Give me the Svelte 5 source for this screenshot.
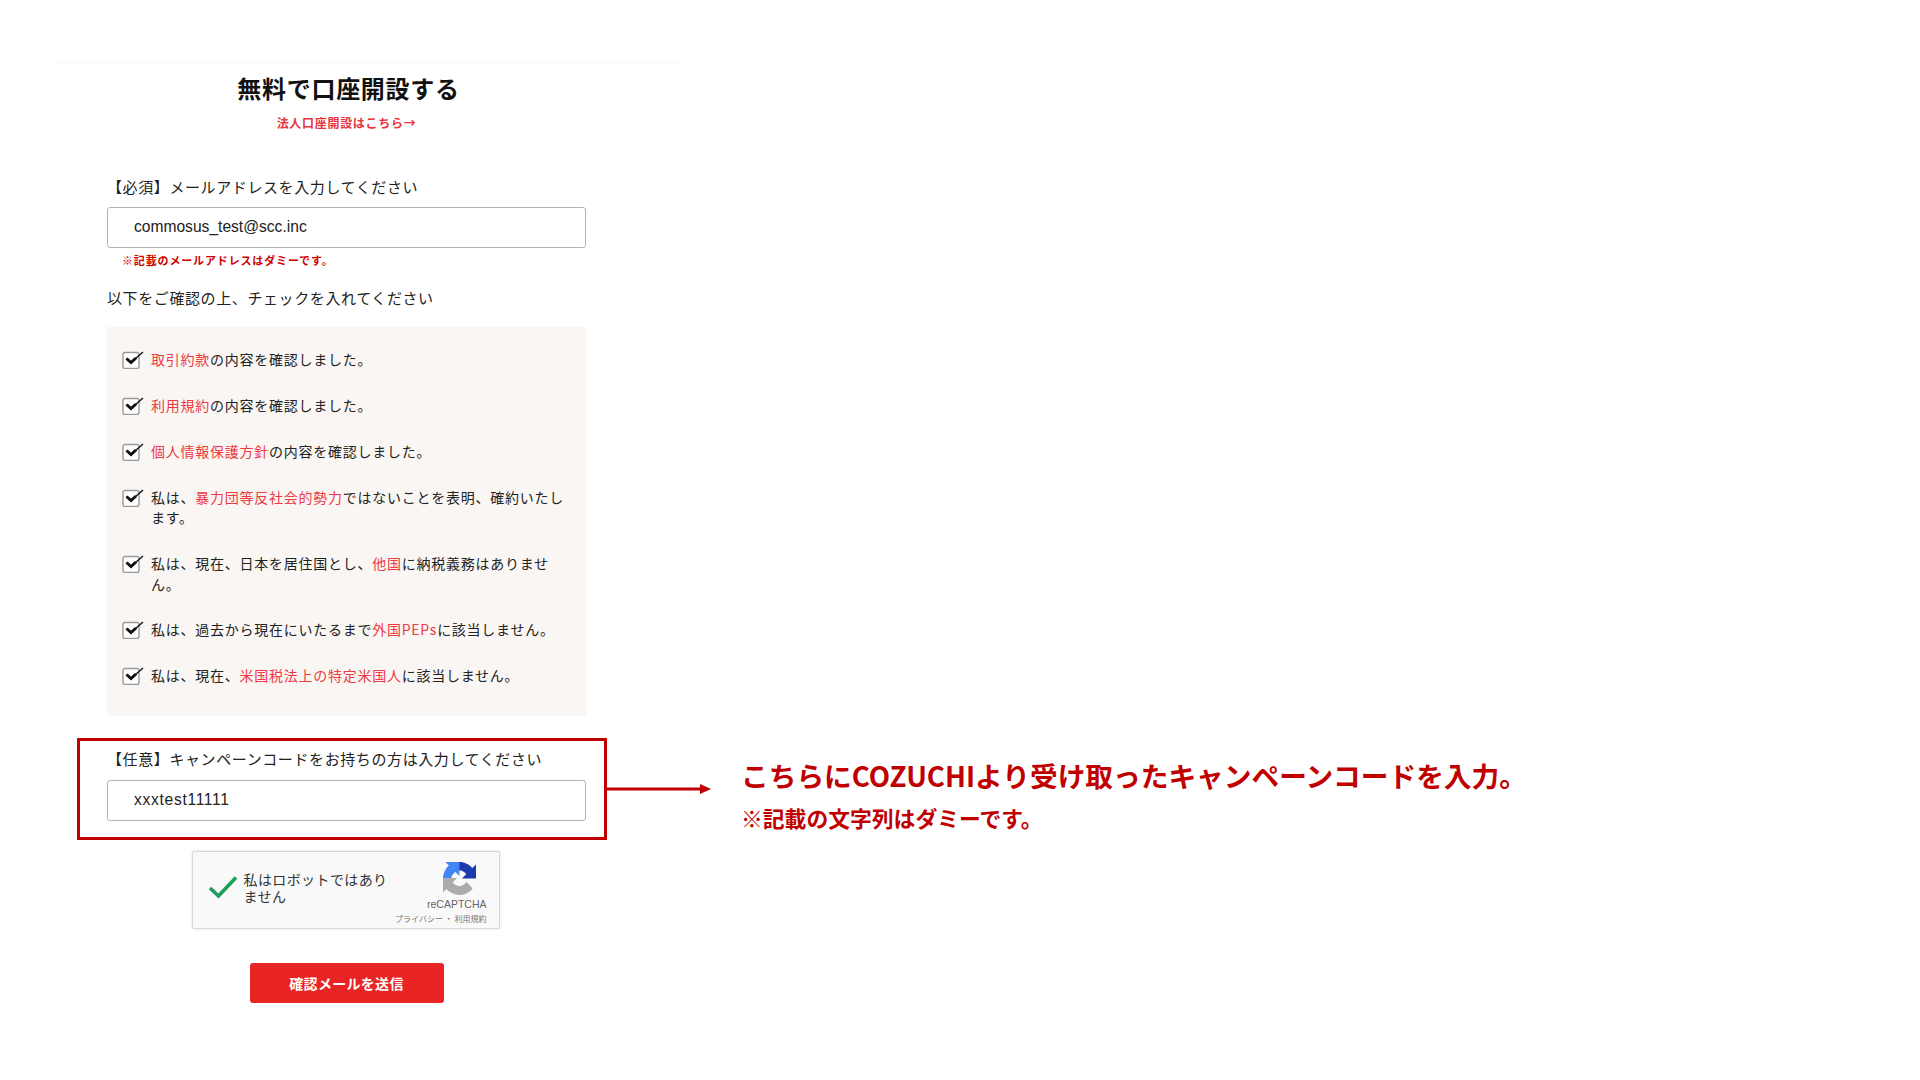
<script>
	const terms = [
		{ before: "", link: "取引約款", after: "の内容を確認しました。" },
		{ before: "", link: "利用規約", after: "の内容を確認しました。" },
		{ before: "", link: "個人情報保護方針", after: "の内容を確認しました。" },
		{ before: "私は、", link: "暴力団等反社会的勢力", after: "ではないことを表明、確約いたします。" },
		{ before: "私は、現在、日本を居住国とし、", link: "他国", after: "に納税義務はありません。" },
		{ before: "私は、過去から現在にいたるまで", link: "外国PEPs", after: "に該当しません。" },
		{ before: "私は、現在、", link: "米国税法上の特定米国人", after: "に該当しません。" }
	];
</script>

<main class="form">
	<h1>無料で口座開設する</h1>
	<a class="corp" href="#corp">法人口座開設はこちら→</a>

	<label class="label first" for="email">【必須】メールアドレスを入力してください</label>
	<div class="input" id="email">commosus_test@scc.inc</div>
	<p class="note">※記載のメールアドレスはダミーです。</p>

	<p class="label confirm">以下をご確認の上、チェックを入れてください</p>
	<ul class="terms">
		{#each terms as t}
			<li>
				<svg class="check" viewBox="0 0 23 18" width="23" height="18" aria-hidden="true">
					<rect x="1" y="1.5" width="16" height="16" rx="2" fill="#fff" stroke="#9a9a9a" stroke-width="1.4" />
					<path d="M4.5 7.5 L9 11.5 L21 1" fill="none" stroke="#111" stroke-width="1.4" />
					<path d="M4.5 7.5 L9 11.5 L14 7" fill="none" stroke="#111" stroke-width="3" />
				</svg>
				<span>{t.before}<a href="#term">{t.link}</a>{t.after}</span>
			</li>
		{/each}
	</ul>

	<section class="campaign">
		<label class="label" for="code">【任意】キャンペーンコードをお持ちの方は入力してください</label>
		<div class="input code" id="code">xxxtest11111</div>

		<!-- arrow and text sit outside the form, pointing at the box -->
		<svg class="arrow" viewBox="0 0 104 12" width="104" height="12" aria-hidden="true">
			<path d="M0 6H93" stroke="#c00000" stroke-width="3" />
			<path d="M93 1 L104 6 L93 11Z" fill="#c00000" />
		</svg>
		<div class="callout">
			<p class="callout-main">こちらにCOZUCHIより受け取ったキャンペーンコードを入力。</p>
			<p class="callout-sub">※記載の文字列はダミーです。</p>
		</div>
	</section>

	<div class="captcha">
		<svg class="tick" viewBox="0 0 30 24" width="30" height="24" aria-hidden="true">
			<path d="M2 13 L10.5 21 L28 2.5" fill="none" stroke="#1e9e5a" stroke-width="3.6" />
		</svg>
		<span class="captcha-text">私はロボットではありません</span>
		<div class="captcha-brand">
			<svg class="logo" viewBox="0 0 64 64" width="33" height="33" aria-hidden="true">
				<path d="M64 31.955l-.033-1.37V4.687l-7.16 7.16C50.948 4.674 42.033.093 32.05.093c-10.4 0-19.622 4.96-25.458 12.64l11.736 11.86a15.55 15.55 0 0 1 4.754-5.334c2.05-1.6 4.952-2.906 8.968-2.906.485 0 .86.057 1.135.163 4.976.393 9.288 3.14 11.828 7.124l-8.307 8.307 26.2.004" fill="#1c3aa9" />
				<path d="M31.862 0l-1.37.033H4.594l7.16 7.16C4.58 13.052 0 21.967 0 31.95c0 10.4 4.96 19.622 12.64 25.458l11.86-11.736a15.55 15.55 0 0 1-5.334-4.754c-1.6-2.05-2.906-4.952-2.906-8.968 0-.485.057-.86.163-1.135.393-4.976 3.14-9.288 7.124-11.828l8.307 8.307L31.858 0" fill="#4285f4" />
				<path d="M.001 31.955l.033 1.37v25.898l7.16-7.16c5.86 7.173 14.775 11.754 24.76 11.754 10.4 0 19.622-4.96 25.458-12.64L45.677 38.318a15.55 15.55 0 0 1-4.754 5.334c-2.05 1.6-4.952 2.906-8.968 2.906-.485 0-.86-.057-1.135-.163-4.976-.393-9.288-3.14-11.828-7.124l8.307-8.307-26.2-.004" fill="#ababab" />
			</svg>
			<span class="brand-name">reCAPTCHA</span>
			<span class="brand-links">プライバシー ・ 利用規約</span>
		</div>
	</div>

	<button class="submit" type="button">確認メールを送信</button>
</main>

<style>
	:global(body) {
		background: #fff;
	}

	.form {
		box-sizing: border-box;
		width: 634px;
		height: 1017px;
		margin: 63px 0 0 53px;
		padding: 0 101px 0 54px;
		border-top: 1px solid #fafafa;
		display: flex;
		flex-direction: column;
		font-family: "Noto Sans CJK JP", "Liberation Sans", sans-serif;
		color: #222;
	}

	h1 {
		margin: 6px 0 0;
		padding-left: 4px;
		font-size: 24px;
		line-height: 36px;
		font-weight: 700;
		letter-spacing: 0.7px;
		color: #111;
		text-align: center;
	}

	.corp {
		margin-top: 8px;
		font-size: 12px;
		line-height: 18px;
		font-weight: 700;
		letter-spacing: 0.7px;
		color: #e8343c;
		text-align: center;
		text-decoration: none;
	}

	.label {
		display: block;
		margin: 0;
		font-size: 15px;
		line-height: 20px;
		letter-spacing: 0.6px;
	}

	.first {
		margin-top: 45px;
	}

	.input {
		box-sizing: border-box;
		height: 41px;
		margin-top: 10px;
		padding-left: 26px;
		border: 1.5px solid #b4b4b4;
		border-radius: 3px;
		background: #fff;
		font-family: "Liberation Sans", sans-serif;
		font-size: 15.6px;
		line-height: 38px;
		color: #222;
	}

	.note {
		margin: 5px 0 0 15px;
		font-size: 11px;
		line-height: 15px;
		font-weight: 700;
		letter-spacing: 0.85px;
		color: #d00000;
	}

	.confirm {
		margin-top: 20px;
	}

	.terms {
		box-sizing: border-box;
		height: 389px;
		margin: 19px 0 0;
		padding: 22px 20px 0 15px;
		list-style: none;
		background: #f9f6f3;
		display: flex;
		flex-direction: column;
		gap: 25.4px;
	}

	.terms li {
		display: flex;
		gap: 6px;
		font-size: 14px;
		line-height: 20.5px;
		letter-spacing: 0.75px;
	}

	.check {
		flex: none;
		margin-top: 2px;
	}

	.terms a {
		color: #ee3a43;
		text-decoration: none;
	}

	.campaign {
		position: relative;
		box-sizing: border-box;
		height: 102px;
		margin: 22px -21px 0 -30px;
		padding: 8px 18px 0 27px;
		border: 3px solid #c00000;
	}

	.campaign .input {
		margin-top: 11px;
		border-width: 1px;
		letter-spacing: 0.7px;
	}

	.arrow {
		position: absolute;
		left: 100%;
		top: 42px;
		margin-left: 3px;
	}

	.callout {
		position: absolute;
		left: 100%;
		top: 15px;
		margin-left: 137px;
		width: 900px;
		color: #c00000;
		font-weight: 700;
	}

	.callout-main {
		margin: 0;
		font-size: 27.7px;
		line-height: 38px;
	}

	.callout-sub {
		margin: 9px 0 0;
		font-size: 21.8px;
		line-height: 30px;
	}

	.captcha {
		box-sizing: border-box;
		align-self: center;
		width: 308px;
		height: 78px;
		margin: 11px 2px 0 0;
		padding: 0 12px 0 15px;
		border: 1px solid #d8d8d8;
		border-radius: 2px;
		background: #f9f9f9;
		box-shadow: 0 0 3px rgba(0, 0, 0, 0.12);
		display: flex;
		align-items: center;
	}

	.tick {
		flex: none;
		margin-top: -6px;
	}

	.captcha-text {
		width: 150px;
		margin-left: 6px;
		margin-top: -4px;
		font-size: 14px;
		line-height: 17px;
		letter-spacing: 0.4px;
		color: #333;
	}

	.captcha-brand {
		margin-left: auto;
		align-self: stretch;
		padding-top: 10px;
		display: flex;
		flex-direction: column;
		align-items: flex-end;
		color: #666;
	}

	.logo {
		margin-right: 11px;
	}

	.brand-name {
		margin-top: 3px;
		font-family: "Liberation Sans", sans-serif;
		font-size: 10.5px;
		line-height: 12px;
	}

	.brand-links {
		margin-top: 3px;
		font-size: 8px;
		line-height: 12px;
		white-space: nowrap;
		color: #777;
	}

	.submit {
		align-self: center;
		width: 194px;
		height: 40px;
		margin-top: 34px;
		padding: 0;
		border: none;
		border-radius: 3px;
		background: #e82424;
		font-family: inherit;
		font-size: 14px;
		font-weight: 700;
		letter-spacing: 0.3px;
		color: #fff;
	}
</style>
